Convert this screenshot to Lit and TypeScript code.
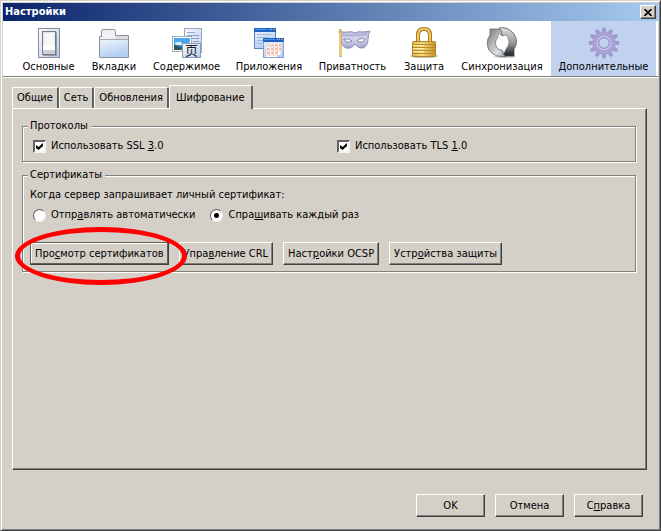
import { LitElement, html, css, svg } from "lit";
import { customElement, state } from "lit/decorators.js";

const icons: Record<string, unknown> = {
  general: svg`
    <rect x="5.500" y="1.500" width="21" height="29" fill="url(#plate)" stroke="#8a8c94"/>
    <rect x="10" y="5" width="14" height="24" rx="1" fill="#8f9bb2"/>
    <rect x="9.500" y="4.500" width="13" height="23" fill="#e3e4e8" stroke="#777b84"/>
    <rect x="11" y="6" width="10" height="12" fill="#f6f6f7"/>
    <rect x="10" y="18" width="12" height="5" fill="#fff"/>
    <rect x="10" y="23" width="12" height="4" fill="#cdd0d7"/>`,
  tabs: svg`
    <path d="M1.500 30.500V9.500H3.500V3.500Q3.500 2.500 5 2.500H16Q17.500 2.500 17.500 4.500V8.500H30.500V30.500Z" fill="#f0f1f4" stroke="#8c929e"/>
    <path d="M18 9h12v3H18z" fill="#d9dbe0"/>
    <rect x="2" y="13" width="28" height="17" fill="url(#blue)"/>
    <path d="M2 12.500h28" stroke="#a9a9a9"/>`,
  content: svg`
    <rect x="13.500" y="1.500" width="17" height="24" fill="url(#plate)" stroke="#9aa7bd"/>
    <path d="M16 5.500h8M16 8.500h12M16 11.500h12M22 14.500h6" stroke="#8fa5cf"/>
    <rect x="1.500" y="9.500" width="19" height="15" fill="#fff" stroke="#a0b0c8"/>
    <rect x="3" y="11" width="16" height="12" fill="#4ba6ea"/>
    <path d="M3 17q4-4 8-1t8-1v3H3z" fill="#d8f1fa"/>
    <path d="M3 17q6 3 16 2v4H3z" fill="#2b6ca8"/>
    <path d="M3 18l7 3v2H3z" fill="#2f5a4b"/>
    <rect x="11.500" y="16.500" width="18" height="14" fill="url(#plate)" stroke="#8d9bb3"/>
    <text x="14" y="28" class="glyph">页</text>`,
  apps: svg`
    <rect x="1.500" y="1.500" width="21" height="20" fill="url(#blue)" stroke="#4d84cc"/>
    <rect x="1" y="1" width="22" height="4" rx="1" fill="#1b62c4"/>
    <path d="M2 2.500h12" stroke="#4c96ee"/><path d="M16 2.500h1M18 2.500h1" stroke="#a8ccf8"/><path d="M20 2.500h2" stroke="#f08d4b"/>
    <path d="M4 7.500h14M4 10.500h11M4 13.500h6M4 16.500h5" stroke="#a3b5da"/>
    <rect x="10.500" y="11.500" width="20" height="19" fill="url(#blue)" stroke="#82a4d4"/>
    <rect x="10" y="11" width="21" height="4" rx="1" fill="#1b62c4"/>
    <path d="M11 12.500h11" stroke="#4c96ee"/><path d="M24 12.500h1M26 12.500h1" stroke="#a8ccf8"/><path d="M28 12.500h2" stroke="#f08d4b"/>
    <path d="M16 16h12v12h-4v2H13V20h3z" fill="#fff"/>
    <path d="M16 20h12M13 24h15M13 28h11M16.500 16v13M20.500 16v13M24.500 16v13M28 16v12M13 20v9" fill="none" stroke="#e9d2cc"/>
    <path d="M18 17h2v2h-2zM22 17h2v2h-2zM26 17h2v2h-2zM14 21h2v2h-2zM18 21h2v2h-2zM22 21h2v2h-2zM26 21h2v2h-2zM14 25h2v2h-2zM18 25h2v2h-2zM22 25h2v2h-2z" fill="#f6b498"/>`,
  privacy: svg`
    <path d="M2 4Q7 6 11 5Q15 4 18 6Q21 4 25 5Q29 5 33 4Q31 7 31 12Q31 19 26 21Q21 22 18 17Q15 22 9 21Q4 19 4 12Q4 7 2 4Z" fill="url(#mask)" stroke="#8d8db8"/>
    <path d="M5 8q7 1 12 0q6 1 13-1" fill="none" stroke="#a5a5cc"/>
    <path d="M6.500 12.500q5-2 8.500 1.500q-4 3-8.500-1.500ZM20 14q4-4 8.500-1.500q-4 4.500-8.500 1.500Z" fill="#fff" stroke="#6c6c98" stroke-width=".8"/>
    <path d="M3.500 2v28" stroke="#c3942b" stroke-width="2"/><path d="M3.500 3v26" stroke="#f0cf69"/>`,
  security: svg`
    <ellipse cx="16" cy="29" rx="14" ry="2" fill="#bfbfbf"/>
    <path d="M10 16V8Q10 2 16 2T22 8V16" fill="none" stroke="#a5781c" stroke-width="4"/>
    <path d="M10 16V8Q10 2 16 2T22 8V16" fill="none" stroke="#f0cc62" stroke-width="2"/>
    <rect x="4.500" y="14.500" width="23" height="15" rx="1" fill="url(#gold)" stroke="#b28324"/>
    <path d="M5 17.500h22M5 20.500h22M5 23.500h22M5 26.500h22" stroke="#b98a26"/>
    <path d="M5 18.500h11M5 21.500h11M5 24.500h11" stroke="#fdf0b8"/>`,
  sync: svg`
    <ellipse cx="19" cy="29.500" rx="11" ry="1.500" fill="#c9c9c9"/>
    <path d="M13 1Q22-1 28 7Q33 15 28 22L28 29H17L18 26L20 22Q24 18 22 12Q20 8 16 9Q16 4 13 1Z" fill="url(#steelDark)" stroke="#4d5053" stroke-width=".8"/>
    <path d="M20 29.500Q9 31 3 23Q-1 15 4 8L4 2H13Q16 4 16 8L12 10Q8 15 10 20Q12 24 16 23Q16 27 20 29.500Z" fill="url(#steel)" stroke="#686b6e" stroke-width=".8"/>
    <path d="M12 10L13 6L16 9L20 8Q26 15 20 22L18 26L16 23L12 22Q7 16 12 10Z" fill="#fff" stroke="#777" stroke-width=".6"/>`,
  advanced: svg`
    ${[0, 30, 60, 90, 120, 150, 180, 210, 240, 270, 300, 330].map(
      (a) => svg`<path d="M14.800 1h2.400l1 5.500h-4.400z" fill="#a69bd3" stroke="#8f88c4" stroke-width=".6" transform="rotate(${a} 16 16)"/>`
    )}
    <circle cx="16" cy="16" r="11" fill="#a69bd3"/>
    <circle cx="16" cy="16" r="9" fill="none" stroke="#aea6da" stroke-width="1.500"/>
    <circle cx="16" cy="16" r="6.500" fill="none" stroke="#c9c8ee" stroke-width="1.500"/>
    <circle cx="16" cy="16" r="5.300" fill="#c1d2ee" stroke="#8d86c4"/>`,
};

const gradients = svg`<defs>
  <linearGradient id="plate" x2="1" y2="1"><stop stop-color="#fafbfe"/><stop offset="1" stop-color="#b5cbee"/></linearGradient>
  <linearGradient id="blue" x2=".4" y2="1"><stop stop-color="#eef4fd"/><stop offset="1" stop-color="#b4cdf2"/></linearGradient>
  <linearGradient id="mask" x2="0" y2="1"><stop stop-color="#babade"/><stop offset=".5" stop-color="#d3d3ec"/><stop offset="1" stop-color="#a3a3cc"/></linearGradient>
  <linearGradient id="gold"><stop stop-color="#e2b548"/><stop offset=".4" stop-color="#f8dc80"/><stop offset="1" stop-color="#c8942a"/></linearGradient>
  <linearGradient id="steel" x2="1" y2="1"><stop stop-color="#6f7376"/><stop offset=".4" stop-color="#b4b7b9"/><stop offset=".7" stop-color="#dfe1e2"/><stop offset="1" stop-color="#8b8f92"/></linearGradient>
  <linearGradient id="steelDark" x2="0" y2="1"><stop stop-color="#dcdedf"/><stop offset=".55" stop-color="#96999c"/><stop offset="1" stop-color="#1d2022"/></linearGradient>
</defs>`;

const sections = [
  ["general", "Основные"],
  ["tabs", "Вкладки"],
  ["content", "Содержимое"],
  ["apps", "Приложения"],
  ["privacy", "Приватность"],
  ["security", "Защита"],
  ["sync", "Синхронизация"],
  ["advanced", "Дополнительные"],
];

const tabs = ["Общие", "Сеть", "Обновления", "Шифрование"];

@customElement("app-root")
export class AppRoot extends LitElement {
  @state() private section = "advanced";
  @state() private tab = "Шифрование";

  static styles = css`
    :host {
      display: block;
      font: 11px/14px "DejaVu Sans Condensed", "DejaVu Sans", sans-serif;
      color: #000;
    }
    * { box-sizing: border-box; }
    button, input { font: inherit; color: inherit; margin: 0; }
    .window {
      display: flex;
      flex-direction: column;
      min-height: 100vh;
      padding: 1px;
      background: #d4d0c8;
      border: 1px solid;
      border-color: #d4d0c8 #404040 #404040 #d4d0c8;
      box-shadow: inset 1px 1px #fff, inset -1px -1px #808080;
    }
    .titlebar {
      display: flex;
      align-items: center;
      justify-content: space-between;
      height: 18px;
      margin: 1px 1px 0;
      padding: 0 2px;
      background: linear-gradient(90deg, #0a246a, #a6caf0);
      color: #fff;
    }
    .title { margin: 0; font-size: 11px; font-weight: bold; }
    .close {
      display: grid;
      place-items: center;
      width: 16px;
      height: 14px;
      padding: 0;
      color: #000;
    }
    .sections {
      display: grid;
      grid-template-columns: 69fr 62fr 83fr 82fr 85fr 58fr 98fr 105fr;
      height: 56px;
      margin: 0 1px;
      padding: 0 2px 0 11px;
      background: #fff;
      border-bottom: 1px solid #808080;
      box-shadow: 0 1px #fff;
    }
    .section {
      display: flex;
      flex-direction: column;
      align-items: center;
      gap: 1px;
      padding: 6px 0 0;
      border: 0;
      background: none;
      white-space: nowrap;
    }
    .section.current { background: #c1d2ee; }
    .icon { display: block; width: 32px; height: 32px; overflow: visible; }
    .glyph { font: 13px "Noto Sans CJK SC", sans-serif; fill: #1b1e26; }
    .body {
      flex: 1;
      display: flex;
      flex-direction: column;
      padding: 8px 12px 12px 10px;
    }
    .tabs { display: flex; align-items: flex-end; }
    .tab {
      height: 21px;
      padding: 0 4px;
      border: 1px solid #fff;
      border-right: 2px solid #606060;
      border-bottom: 0;
      border-radius: 2px 2px 0 0;
      background: #d4d0c8;
    }
    .tab.current {
      position: relative;
      height: 24px;
      margin-bottom: -1px;
      padding: 0 6px;
    }
    .panel {
      flex: 1;
      display: flex;
      flex-direction: column;
      gap: 6px;
      padding: 10px 10px 10px 9px;
      border: 1px solid #fff;
      border-right-color: #404040;
      border-bottom-color: #404040;
      box-shadow: inset -1px -1px #808080;
    }
    .group {
      min-width: 0;
      margin: 0;
      padding: 6px 7px;
      border: 1px solid #808080;
      box-shadow: 1px 1px #fff, inset 1px 1px #fff;
    }
    .group legend { margin-left: -2px; padding: 0 3px 0 2px; background: #d4d0c8; }
    .protocols {
      display: grid;
      grid-template-columns: 1fr 1fr;
      column-gap: 10px;
      padding-bottom: 8px;
    }
    .option { display: flex; align-items: center; gap: 5px; padding-left: 3px; }
    .mark { display: grid; place-items: center; }
    .mark > * { grid-area: 1 / 1; }
    .check, .radio {
      appearance: none;
      width: 13px;
      height: 13px;
      background: #fff;
      border: 2px solid;
      border-color: #606060 #f4f2ee #f4f2ee #606060;
    }
    .radio { border-radius: 50%; border-width: 1px; }
    .radio:checked { background: radial-gradient(circle, #000 2px, #fff 3px); }
    .tick { width: 7px; height: 7px; pointer-events: none; visibility: hidden; }
    .check:checked + .tick { visibility: visible; }
    .prompt { margin: 0 0 6px; }
    .radios { display: flex; gap: 12px; }
    .actions { display: flex; gap: 10px; margin-top: 20px; }
    .button, .close {
      border: 1px solid;
      border-color: #fff #404040 #404040 #fff;
      background: #d4d0c8;
      box-shadow: inset -1px -1px #808080;
    }
    .button { height: 23px; padding: 0 4px; white-space: nowrap; }
    .emphasis { position: relative; display: flex; }
    .emphasis .button {
      border-color: #606060 #404040 #404040 #606060;
      box-shadow: inset -1px -1px #606060, inset 1px 1px #fff;
    }
    .ring {
      position: absolute;
      z-index: 1;
      inset: -15px -18px -20px -15px;
      border: 5px solid #f00;
      border-radius: 50%;
      pointer-events: none;
    }
    .footer {
      display: flex;
      justify-content: flex-end;
      gap: 10px;
      padding: 24px 4px 0 0;
    }
    .footer .button { width: 69px; }
  `;

  render() {
    return html`
      <div class="window">
        <header class="titlebar">
          <h1 class="title">Настройки</h1>
          <button class="close" aria-label="Закрыть">
            <svg width="8" height="7" viewBox="0 0 8 7"><path d="M.5 0l7 7M7.500 0l-7 7" stroke="#000" stroke-width="1.600"/></svg>
          </button>
        </header>
        <nav class="sections">
          ${sections.map(
            ([id, label]) => html`
              <button class="section ${this.section === id ? "current" : ""}" @click=${() => (this.section = id)}>
                <svg class="icon" viewBox="0 0 32 32" aria-hidden="true">${gradients}${icons[id]}</svg>
                <span>${label}</span>
              </button>`
          )}
        </nav>
        <main class="body">
          <div class="tabs" role="tablist">
            ${tabs.map(
              (t) => html`<button class="tab ${this.tab === t ? "current" : ""}" role="tab"
                aria-selected=${this.tab === t} @click=${() => (this.tab = t)}>${t}</button>`
            )}
          </div>
          <div class="panel" role="tabpanel">
            <fieldset class="group protocols">
              <legend>Протоколы</legend>
              ${this.checkbox(html`Использовать SSL <u>3</u>.0`)}
              ${this.checkbox(html`Использовать TLS <u>1</u>.0`)}
            </fieldset>
            <fieldset class="group">
              <legend>Сертификаты</legend>
              <p class="prompt">Когда сервер запрашивает личный сертификат:</p>
              <div class="radios">
                <label class="option"><input class="radio" type="radio" name="ask" /><span>Отпр<u>а</u>влять автоматически</span></label>
                <label class="option"><input class="radio" type="radio" name="ask" checked /><span>Спра<u>ш</u>ивать каждый раз</span></label>
              </div>
              <div class="actions">
                <div class="emphasis">
                  <button class="button">Про<u>с</u>мотр сертификатов</button>
                  <div class="ring"></div>
                </div>
                <button class="button">Упра<u>в</u>ление CRL</button>
                <button class="button">Наст<u>р</u>ойки OCSP</button>
                <button class="button">Устр<u>о</u>йства защиты</button>
              </div>
            </fieldset>
          </div>
          <footer class="footer">
            <button class="button">OK</button>
            <button class="button">Отмена</button>
            <button class="button">С<u>п</u>равка</button>
          </footer>
        </main>
      </div>`;
  }

  private checkbox(label: unknown) {
    return html`<label class="option">
      <span class="mark">
        <input class="check" type="checkbox" checked />
        <svg class="tick" viewBox="0 0 7 7"><path d="M0 2v3l2.500 2L7 3V0L2.500 4z"/></svg>
      </span>
      <span>${label}</span>
    </label>`;
  }
}
